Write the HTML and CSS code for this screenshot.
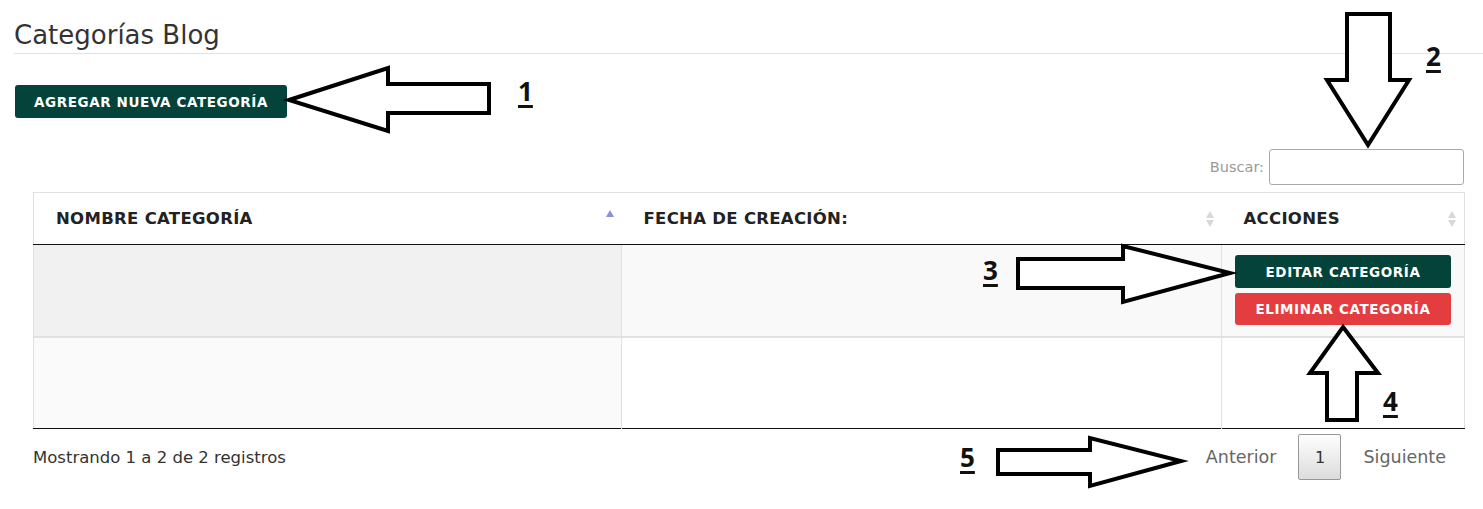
FILE: index.html
```html
<!DOCTYPE html>
<html lang="es">
<head>
<meta charset="utf-8">
<title>Categorías Blog</title>
<link rel="stylesheet" href="styles.css">
</head>
<body>
<div class="page">
  <h1 class="title">Categorías Blog</h1>
  <div class="toolbar">
    <button class="btn btn-green btn-add">AGREGAR NUEVA CATEGORÍA</button>
  </div>
  <div class="datatable">
    <div class="search">
      <label class="search-label">Buscar:</label>
      <input class="search-input" type="text">
    </div>
    <table class="grid">
      <thead>
        <tr>
          <th class="c1"><span>NOMBRE CATEGORÍA</span><span class="sort asc"><i class="up"></i></span></th>
          <th class="c2"><span>FECHA DE CREACIÓN:</span><span class="sort"><i class="up"></i><i class="down"></i></span></th>
          <th class="c3"><span>ACCIONES</span><span class="sort"><i class="up"></i><i class="down"></i></span></th>
        </tr>
      </thead>
      <tbody>
        <tr class="odd">
          <td class="c1 sorted"></td>
          <td class="c2"></td>
          <td class="c3">
            <div class="actions">
              <button class="btn btn-green">EDITAR CATEGORÍA</button>
              <button class="btn btn-red">ELIMINAR CATEGORÍA</button>
            </div>
          </td>
        </tr>
        <tr class="even">
          <td class="c1 sorted"></td>
          <td class="c2"></td>
          <td class="c3"></td>
        </tr>
      </tbody>
    </table>
    <div class="footer">
      <div class="info">Mostrando 1 a 2 de 2 registros</div>
      <div class="pager">
        <span class="pg-link">Anterior</span>
        <span class="pg-current">1</span>
        <span class="pg-link">Siguiente</span>
      </div>
    </div>
  </div>

  <svg class="annotations" width="1483" height="509" viewBox="0 0 1483 509">
    <g fill="#fff" stroke="#000" stroke-width="4" stroke-linejoin="miter">
      <polygon points="289,100 388,68 388,84 489,84 489,113 388,113 388,131"/>
      <polygon points="1347,14 1390,14 1390,80 1409,80 1368,145 1327,80 1347,80"/>
      <polygon points="1018,259 1123,259 1123,246 1230,273 1123,302 1123,288 1018,288"/>
      <polygon points="1343,327 1378,373 1357,373 1357,420 1327,420 1327,373 1310,373"/>
      <polygon points="998,450 1090,450 1090,438 1181,461 1090,486 1090,474 998,474"/>
    </g>
  </svg>
  <span class="num n1">1</span>
  <span class="num n2">2</span>
  <span class="num n3">3</span>
  <span class="num n4">4</span>
  <span class="num n5">5</span>
</div>
</body>
</html>
```
FILE: styles.css
```css
* { box-sizing: border-box; }
html, body { margin: 0; padding: 0; background: #fff; }
body {
  font-family: "DejaVu Sans", "Open Sans", sans-serif;
  color: #222;
  width: 1483px;
  height: 509px;
  overflow: hidden;
}
.page {
  position: relative;
  width: 1483px;
  height: 509px;
  padding-left: 14px;
}
.title {
  margin: 0;
  padding-top: 21px;
  padding-bottom: 4px;
  font-weight: 400;
  font-size: 26px;
  line-height: 28px;
  color: #333;
  border-bottom: 1px solid #e2e2e2;
}
.toolbar {
  padding-top: 31px;
  padding-left: 1px;
  display: flex;
}
.btn {
  border: 0;
  border-radius: 3px;
  color: #fff;
  font-family: "DejaVu Sans", sans-serif;
  font-weight: 700;
  font-size: 13.5px;
  letter-spacing: 0.6px;
  padding: 0;
  cursor: pointer;
}
.btn-green { background: #03433a; }
.btn-red { background: #e43d40; }
.btn-add {
  width: 272px;
  height: 33px;
}
.datatable {
  margin-left: 19px;
  width: 1431px;
  margin-top: 31px;
}
.search {
  display: flex;
  justify-content: flex-end;
  align-items: center;
  gap: 5px;
  height: 36px;
}
.search-label {
  font-size: 14.5px;
  color: #9a9a9a;
}
.search-input {
  width: 195px;
  height: 36px;
  border: 1px solid #aaa;
  border-radius: 3px;
  background: #fff;
}
.grid {
  margin-top: 7px;
  width: 1431px;
  border-collapse: collapse;
  table-layout: fixed;
  border: 1px solid #e1e1e1;
  border-bottom: 1px solid #111;
}
.grid th.c1, .grid td.c1 { width: 588px; }
.grid th.c2, .grid td.c2 { width: 600px; }
.grid th.c3, .grid td.c3 { width: 243px; }
.grid th {
  height: 52px;
  padding: 0 12px 0 22px;
  text-align: left;
  font-size: 16.5px;
  letter-spacing: 0.3px;
  font-weight: 700;
  color: #222;
  border-bottom: 1px solid #111;
  position: relative;
}
.grid th > span:first-child { display: inline-block; }
.sort {
  position: absolute;
  right: 8px;
  top: 50%;
  transform: translateY(-50%);
  display: flex;
  flex-direction: column;
  gap: 2px;
}
.sort i {
  display: block;
  width: 0; height: 0;
  border-left: 4px solid transparent;
  border-right: 4px solid transparent;
}
.sort i.up { border-bottom: 7px solid #d8d8d8; }
.sort i.down { border-top: 7px solid #d8d8d8; }
.sort.asc { transform: translateY(-9px); }
.sort.asc i.up { border-bottom-color: #8a90d9; }
.grid td {
  border: 1px solid #e1e1e1;
  border-bottom: 0;
  padding: 0;
  vertical-align: top;
}
.grid td.c1 { border-left: 0; }
.grid td.c3 { border-right: 0; }
.grid tr.odd td { height: 92px; background: #f9f9f9; border-top: 0; }
.grid tr.odd td.sorted { background: #f1f1f1; }
.grid tr.even td { height: 92px; background: #fff; border-top: 2px solid #e1e1e1; }
.grid tr.even td.sorted { background: #fafafa; }
.actions {
  display: flex;
  flex-direction: column;
  gap: 5px;
  padding: 10px 12px 0 13px;
}
.actions .btn { width: 216px; height: 33px; }
.actions .btn-red { height: 32px; }
.footer {
  display: flex;
  justify-content: space-between;
  align-items: center;
  margin-top: 5px;
  height: 46px;
}
.info {
  font-size: 16.5px;
  color: #333;
}
.pager {
  display: flex;
  align-items: center;
  gap: 0;
  padding-right: 18px;
}
.pg-link {
  font-size: 17.5px;
  color: #666;
  padding: 0 22px;
}
.pg-link:last-child { padding-right: 0; }
.pg-current {
  width: 43px;
  height: 46px;
  border: 1px solid #979797;
  border-radius: 2px;
  background: linear-gradient(#fefefe, #dcdcdc);
  display: flex;
  align-items: center;
  justify-content: center;
  font-size: 16px;
  color: #333;
}
.annotations {
  position: absolute;
  left: 0; top: 0;
  pointer-events: none;
}
.num {
  position: absolute;
  font-family: "Open Sans", "DejaVu Sans", sans-serif;
  font-weight: 700;
  font-size: 26px;
  line-height: 30px;
  color: #111;
  text-decoration: underline;
  text-decoration-thickness: 3px;
  text-underline-offset: 4px;
}
.n1 { left: 518px; top: 76px; }
.n2 { left: 1426px; top: 41px; }
.n3 { left: 983px; top: 255px; }
.n4 { left: 1383px; top: 386px; }
.n5 { left: 960px; top: 442px; }
```
